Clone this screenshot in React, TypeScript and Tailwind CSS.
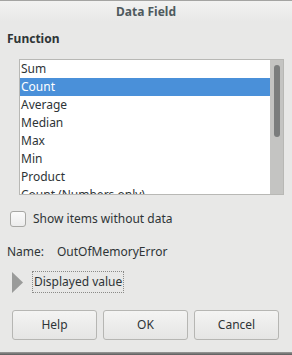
import React from "react";

const items = ["Sum", "Count", "Average", "Median", "Max", "Min", "Product", "Count (Numbers only)"];

export default function App() {
  return (
    <div
      className="w-[292px] h-[355px] bg-[#e8e8e7] flex flex-col overflow-hidden text-[#2e3436] text-[12px]"
      style={{ fontFamily: '"Noto Sans", "DejaVu Sans", sans-serif' }}
    >
      <div className="h-[1px] bg-[#a4a4a2]" />
      <div className="h-[21px] flex items-center justify-center bg-gradient-to-b from-[#f2f2f1] to-[#e8e8e7] font-bold text-[#4f5a5e] leading-none pt-[1px]">
        Data Field
      </div>
      <div className="h-[32px] pl-[7px] flex items-center font-bold text-[#2e3436] pt-[1px]">Function</div>
      <div className="mt-[5px] ml-[19px] w-[265px] h-[136px] border border-[#b8b8b5] bg-white flex">
        <div className="flex-1 flex flex-col overflow-hidden">
          {items.map((it) => (
            <div
              key={it}
              className={
                "h-[18px] shrink-0 pl-[1px] flex items-center leading-none " +
                (it === "Count" ? "bg-[#4a90d9] text-white" : "text-[#2e3436]")
              }
            >
              {it}
            </div>
          ))}
        </div>
        <div className="w-[13px] bg-[#c4c4c2] flex justify-center pt-[5px]">
          <div className="w-[6px] h-[72px] rounded-[3px] bg-[#7b7d7d]" />
        </div>
      </div>
      <div className="mt-[16px] h-[16px] flex items-center pl-[10px] gap-[7px]">
        <div className="w-[16px] h-[16px] rounded-[3px] border border-[#a7a7a4] bg-gradient-to-b from-[#fbfbfb] to-[#ececec]" />
        <span className="leading-none">Show items without data</span>
      </div>
      <div className="mt-[16px] h-[17px] flex items-center pl-[7px] leading-none">
        <span className="w-[50px]">Name:</span>
        <span>OutOfMemoryError</span>
      </div>
      <div className="mt-[11px] h-[22px] flex items-center pl-[12px]">
        <svg width="11" height="21" viewBox="0 0 11 21" className="shrink-0">
          <polygon points="0,0 11,10.5 0,21" fill="#9a9b9a" />
        </svg>
        <div className="ml-[9px] h-[22px] px-[1px] flex items-center border border-dotted border-[#8a8a88] leading-none">
          Displayed value
        </div>
      </div>
      <div className="mt-[17px] flex pl-[12px] gap-[6px]">
        {["Help", "OK", "Cancel"].map((b) => (
          <div
            key={b}
            className="w-[85px] h-[30px] rounded-[3px] border border-[#b6b6b3] bg-gradient-to-b from-[#f4f4f3] to-[#e5e5e4] flex items-center justify-center leading-none text-[#2e3436]"
          >
            {b}
          </div>
        ))}
      </div>
      <div className="flex-1" />
      <div className="h-[3px] bg-gradient-to-b from-[#9c9c9b] to-[#5a5a5a]" />
    </div>
  );
}
